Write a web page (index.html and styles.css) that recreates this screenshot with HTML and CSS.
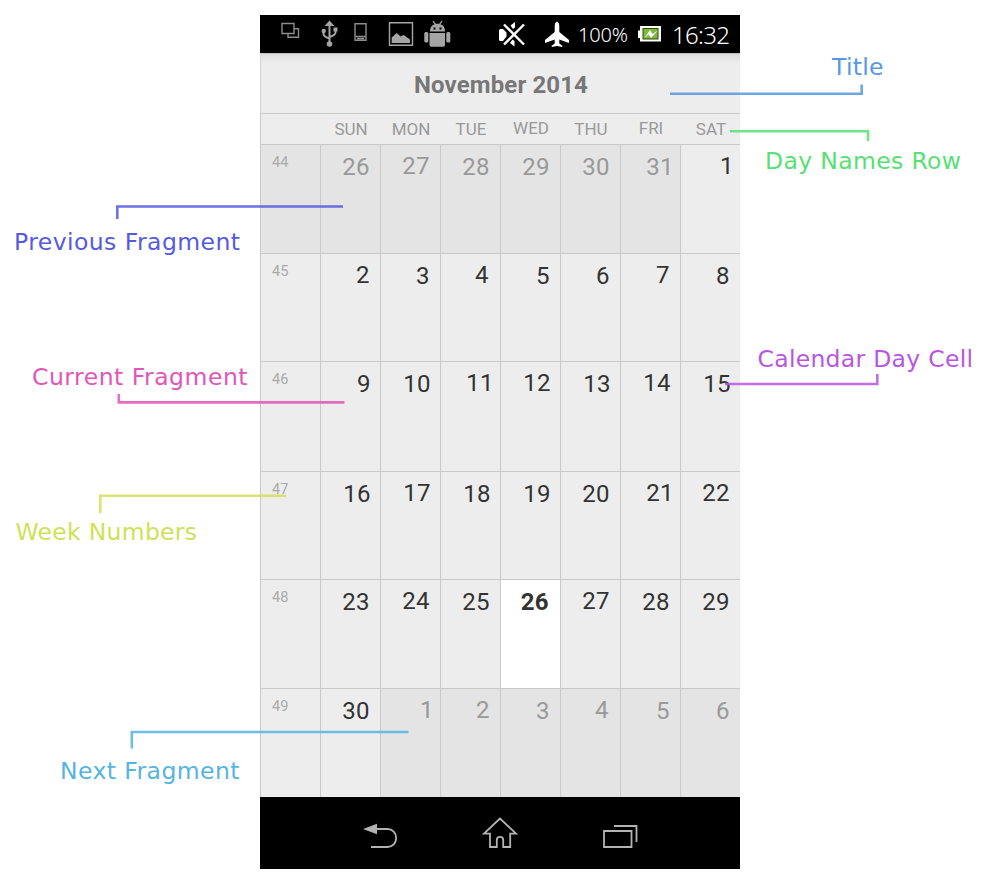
FILE: index.html
```html
<!DOCTYPE html>
<html lang="en">
<head>
<meta charset="utf-8">
<title>Calendar anatomy</title>
<link rel="stylesheet" href="styles.css">
</head>
<body>
<main class="stage">
  <section class="phone">
    <header class="status">
      <svg class="ico ico-windows" viewBox="281 15 20 38" width="20" height="38"><path d="M282 23.500h12v10h-12z M294 28.700h4.500v8.600h-10.500v-3.800"/></svg>
      <svg class="ico ico-usb" viewBox="321 15 17 38" width="17" height="38"><path class="thick" d="M329.500 23v21M323.500 31v3q0 2.500 6 4.500M335.500 29.500v3q0 2.500-6 4.500"/><path class="solid" d="M329.500 20.500l5 5.500h-10z"/><circle class="solid" cx="323.700" cy="31" r="2.200"/><path class="solid" d="M333.500 27.500h4v4h-4z"/><circle class="solid" cx="329.500" cy="44" r="2.800"/></svg>
      <svg class="ico ico-device" viewBox="354 15 14 38" width="14" height="38"><path d="M355 23.700h11v16.500h-11zM355 36.500h11M357 38.500h7"/></svg>
      <svg class="ico ico-picture" viewBox="388 15 26 38" width="26" height="38"><path class="bright" d="M389.500 22.700h23v22.500h-23z"/><path class="solid" d="M391.700 43v-5.500l5-4.500 4 3.500 3-1.500 6.300 4.500v3.500z"/></svg>
      <svg class="ico ico-android" viewBox="424 15 27 38" width="27" height="38"><path class="solid" d="M430 31.500q0-6 4.500-7.200l-2-2.800 1-.7 2.300 2.900h3.400l2.300-2.900 1 .7-2 2.800q4.500 1.200 4.500 7.200zM429.500 33h15.500v12q0 1.700-1.700 1.700h-12.100q-1.700 0-1.700-1.700z"/><rect class="solid" x="424.300" y="32" width="4" height="10.500" rx="1.500"/><rect class="solid" x="446.300" y="32" width="4" height="10.500" rx="1.500"/><path class="hole" d="M433.500 27.500h2v2h-2zM439.500 27.500h2v2h-2z"/></svg>
      <svg class="ico ico-mute" viewBox="498 15 28 38" width="28" height="38"><path class="white" d="M499 30.500q0-1.500 1.500-1.500h2.500l3.500 3.500v4l-3.500 4.500h-2.500q-1.500 0-1.500-1.500zM510.500 25.500l4.500-3.500v5.500l-2 1.500zM510 43l4.500 3.500v-5.500l-2-1.500z"/><path class="cross" d="M504 24.500l20 20M524 24.500l-20 20"/></svg>
      <svg class="ico ico-plane" viewBox="544 15 26 38" width="26" height="38"><path class="white" d="M557 21.500q2.300 1 2.300 4v6.500l9.700 8v3l-9.700-3.500v4l3 2.200v1.300l-5.300-1-5.300 1v-1.300l3-2.200v-4l-9.700 3.500v-3l9.700-8v-6.500q0-3 2.300-4z"/></svg>
      <span class="percent">100%</span>
      <svg class="ico ico-battery" viewBox="637 15 25 38" width="25" height="38"><path class="white" d="M640 26h21v15.500h-21v-3.500h-2v-7.500h2z"/><path class="charge-dark" d="M642.500 28h16v11.500h-16z"/><path class="charge" d="M643.500 29h14v9.500h-14z"/><path class="white" d="M644.500 38l5.500-8 2.500 4 5.500-3.500-7 7.500-2.500-3.500z"/></svg>
      <span class="clock">16:32</span>
    </header>
    <h1 class="title"><span>November 2014</span></h1>
    <div class="names">
      <span></span><span>SUN</span><span>MON</span><span>TUE</span><span class="up">WED</span><span>THU</span><span class="up">FRI</span><span>SAT</span>
    </div>
    <div class="grid">
      <div class="week dim">44</div><div class="day dim">26</div><div class="day dim up">27</div><div class="day dim">28</div><div class="day dim">29</div><div class="day dim">30</div><div class="day dim one">31</div><div class="day up one">1</div>
      <div class="week">45</div><div class="day up">2</div><div class="day">3</div><div class="day up four">4</div><div class="day">5</div><div class="day">6</div><div class="day up">7</div><div class="day">8</div>
      <div class="week">46</div><div class="day teen">9</div><div class="day teen">10</div><div class="day up one">11</div><div class="day up teen">12</div><div class="day teen">13</div><div class="day up teen">14</div><div class="day teen">15</div>
      <div class="week">47</div><div class="day teen">16</div><div class="day up teen">17</div><div class="day teen">18</div><div class="day teen">19</div><div class="day">20</div><div class="day up one">21</div><div class="day up">22</div>
      <div class="week">48</div><div class="day">23</div><div class="day up">24</div><div class="day">25</div><div class="day today">26</div><div class="day up">27</div><div class="day">28</div><div class="day">29</div>
      <div class="week">49</div><div class="day">30</div><div class="day dim up one">1</div><div class="day dim up">2</div><div class="day dim">3</div><div class="day dim up four">4</div><div class="day dim">5</div><div class="day dim">6</div>
    </div>
    <nav class="nav">
      <svg viewBox="360 797 40 72" width="40" height="72"><path class="nav-fill" d="M363 829l14-5.300v10.600z"/><path d="M376 829h11.500c5 0 8.700 4 8.700 9s-3.700 9-8.700 9H371"/></svg>
      <svg viewBox="480 797 40 72" width="40" height="72"><path d="M500 818.500l-16 15.200h6v13.300h6.800v-7q0-3.200 3.200-3.200t3.200 3.200v7h7v-13.300h5.800z"/></svg>
      <svg viewBox="600 797 40 72" width="40" height="72"><path d="M604 831h27.500v16H604zM614 826h22.500v16"/></svg>
    </nav>
  </section>

  <svg class="callouts" viewBox="0 0 983 882" width="983" height="882">
    <g class="c-title"><path d="M670 93.700H861.700V84.500"/><text x="832" y="74.700" textLength="51.500">Title</text></g>
    <g class="c-names"><path d="M730 131.300H868V141"/><text x="765" y="168.700" textLength="196">Day Names Row</text></g>
    <g class="c-prev"><path d="M343 206.500H117.300V219"/><text x="14" y="250" textLength="226">Previous Fragment</text></g>
    <g class="c-current"><path d="M344.500 402.400H118.800V394"/><text x="32" y="384.700" textLength="215.500">Current Fragment</text></g>
    <g class="c-cell"><path d="M725 384H877.300V374"/><text x="757.500" y="366.700" textLength="215.500">Calendar Day Cell</text></g>
    <g class="c-week"><path d="M286 495.800H100.300V513"/><text x="15.500" y="539.700" textLength="181.500">Week Numbers</text></g>
    <g class="c-next"><path d="M408.500 732H131.800V748.500"/><text x="60" y="779" textLength="179.500">Next Fragment</text></g>
  </svg>
</main>
</body>
</html>
```

FILE: styles.css
```css
* { box-sizing: border-box; }
body { margin: 0; background: #fff; font-family: Roboto, "Liberation Sans", sans-serif; }
.stage { position: relative; width: 983px; height: 882px; padding: 15px 0 0 260px; overflow: hidden; }
.phone { width: 480px; height: 854px; background: #ededed; }

/* status bar */
.status { display: flex; height: 38px; background: #000; color: #fff; font-family: "Noto Sans", sans-serif; }
.ico { flex: none; fill: none; stroke: #8c8c8c; stroke-width: 1.4; }
.ico .solid { fill: #a5a5a5; stroke: none; }
.ico .thick { stroke: #a5a5a5; stroke-width: 2; }
.ico .bright { stroke: #a5a5a5; }
.ico .white { fill: #fff; stroke: none; }
.ico .hole { fill: #000; stroke: none; }
.ico .cross { stroke: #fff; stroke-width: 2.4; }
.ico .charge { fill: #7fb93a; stroke: none; }
.ico .charge-dark { fill: #2c4a0c; stroke: none; }
.ico-windows { margin-left: 21px; }
.ico-usb { margin-left: 20px; }
.ico-device { margin-left: 16px; }
.ico-picture { margin-left: 20px; }
.ico-android { margin-left: 10px; }
.ico-mute { margin-left: 47px; }
.ico-plane { margin-left: 18px; }
.percent { width: 59px; margin-left: 8px; font-size: 20px; font-weight: 300; line-height: 40px; letter-spacing: -0.2px; white-space: nowrap; }
.clock { margin-left: 10px; font-size: 24px; font-weight: 300; line-height: 39px; letter-spacing: -0.7px; white-space: nowrap; }

/* heading */
.title { display: flex; justify-content: center; height: 60px; margin: 0; padding: 18px 0 0 1px; border-left: 1px solid #d4d4d4; background: linear-gradient(#a8a8a8 0, #dcdcdc 1px, #e3e3e3 4px, #ededed 11px); color: #777; font-size: 24px; font-weight: 700; line-height: 28px; letter-spacing: 0.13px; }
.names { display: grid; grid-template-columns: repeat(8, 60px); height: 31px; border-top: 1px solid #c9c9c9; border-left: 1px solid #c9c9c9; color: #999; font-size: 17px; line-height: 20px; text-align: center; }
.names span { padding-top: 5px; }
.names .up { padding-top: 4px; }

/* month grid */
.grid { display: grid; grid-template-columns: repeat(8, 60px); grid-template-rows: 109px 108px 110px 108px 109px 109px; }
.week, .day { border-top: 1px solid #c9c9c9; border-left: 1px solid #c9c9c9; }
.week { padding: 9px 0 0 11px; color: #aaa; font-size: 14.5px; line-height: 18px; }
.day { padding: 8px 10px 0 0; color: #333; font-size: 24px; line-height: 28px; letter-spacing: 0.4px; text-align: right; }
.day.up { padding-top: 7px; }
.day.teen { padding-right: 9px; }
.day.one { padding-right: 6px; }
.day.four { padding-right: 11px; }
.dim { background: #e4e4e4; }
.day.dim { color: #999; }
.day.today { padding-right: 11px; background: #fff; font-weight: 700; }

/* navigation bar */
.nav { display: flex; justify-content: space-between; height: 72px; padding: 0 100px; background: #000; }
.nav svg { fill: none; stroke: #b3b3b3; stroke-width: 1.8; }
.nav .nav-fill { fill: #b3b3b3; stroke: none; }

/* annotations */
.callouts { position: absolute; left: 0; top: 0; font-family: "DejaVu Sans", Verdana, sans-serif; font-size: 23.5px; }
.callouts path { fill: none; stroke: currentColor; stroke-width: 2.6; opacity: .86; }
.callouts text { fill: currentColor; }
.c-title { color: #5698e1; }
.c-names { color: #56e173; }
.c-prev { color: #565ae1; }
.c-current { color: #e156b8; }
.c-cell { color: #b856e1; }
.c-week { color: #d0e156; }
.c-next { color: #56b4e1; }
```
